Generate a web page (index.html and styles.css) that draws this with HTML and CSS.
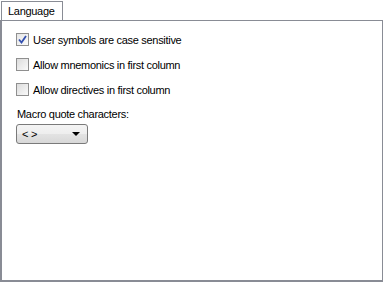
FILE: index.html
```html
<!DOCTYPE html>
<html lang="en">

<head>
  <meta charset="UTF-8">
  <title>Language</title>
  <link rel="stylesheet" href="styles.css">
</head>

<body>
  <div class="tabs">
    <div class="tab active">Language</div>
  </div>
  <div class="panel">
    <label class="check">
      <span class="box checked">
        <svg width="9" height="9" viewBox="0 0 9 9"><path d="M1 4.5 L3.5 7.5 L8 1" fill="none" stroke="#3350b0" stroke-width="1.8"/></svg>
      </span>
      User symbols are case sensitive
    </label>
    <label class="check">
      <span class="box"></span>
      Allow mnemonics in first column
    </label>
    <label class="check">
      <span class="box"></span>
      Allow directives in first column
    </label>

    <div class="field">
      <div class="field-label">Macro quote characters:</div>
      <div class="select">
        <span>&lt; &gt;</span>
        <span class="arrow"></span>
      </div>
    </div>
  </div>
</body>

</html>
```

FILE: styles.css
```css
body {
  margin: 0;
  background-color: #fff;
  font-family: Tahoma, "Liberation Sans", Arial, sans-serif;
  font-size: 11px;
  letter-spacing: -0.3px;
  color: #000;
  width: 383px;
  height: 282px;
}

.tabs {
  display: flex;
  padding: 1px 0 0 1px;
  height: 19px;
}

.tab {
  border: 1px solid #898c95;
  border-bottom: none;
  background-color: #fff;
  padding: 3px 6px 0 6px;
  width: 48px;
  position: relative;
  z-index: 1;
}

.panel {
  box-sizing: border-box;
  height: 262px;
  width: 383px;
  border: 1px solid #898c95;
  border-left-width: 2px;
  border-bottom-width: 2px;
  padding: 12px 0 0 14px;
}

.check {
  display: flex;
  align-items: center;
  gap: 4px;
  height: 13px;
  margin-bottom: 12px;
}

.box {
  box-sizing: border-box;
  width: 13px;
  height: 13px;
  border: 1px solid #8f8f8f;
  background: linear-gradient(135deg, #dcdcdc, #fafafa);
  display: flex;
  align-items: center;
  justify-content: center;
}

.box.checked {
  background: linear-gradient(135deg, #e6e6e6, #fbfbfb);
}

.field {
  margin-top: 8px;
}

.field-label {
  margin-bottom: 4px;
  padding-left: 1px;
}

.select {
  box-sizing: border-box;
  width: 72px;
  height: 20px;
  border: 1px solid #7a7a7a;
  border-radius: 3px;
  background: linear-gradient(#f4f4f4, #eeeeee 50%, #e3e3e3 51%, #d8d8d8);
  display: flex;
  align-items: center;
  justify-content: space-between;
  padding: 0 7px 0 5px;
}

.arrow {
  width: 0;
  height: 0;
  border-left: 4px solid transparent;
  border-right: 4px solid transparent;
  border-top: 4px solid #000;
}
```
